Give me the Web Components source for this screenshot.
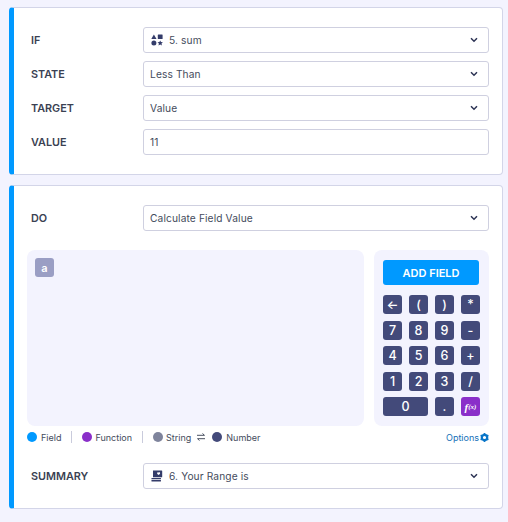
<!DOCTYPE html>
<html>
<head>
<meta charset="utf-8">
<title>Condition</title>
<style>
  html, body { margin: 0; height: 100%; overflow: hidden; }
  body {
    background: #f3f3fe;
    padding: 7px 5px 0 9px;
    box-sizing: border-box;
    font-family: "Inter", "Liberation Sans", sans-serif;
    color: #343c4e;
  }
  cond-card + cond-card { margin-top: 10px; }
</style>
</head>
<body>

<cond-card>
  <field-row label="IF"><field-box arrow>
    <svg slot="icon" width="12" height="12" viewBox="0 0 12 12" fill="#343c6a"><path d="M2.900.4 5.500 5H.3z"/><rect x="6.800" y=".4" width="4.800" height="4.600" rx=".5"/><circle cx="2.900" cy="9" r="2.500"/><path d="m9.200 6.400.8 1.700 1.900.2-1.400 1.300.4 1.900-1.700-1-1.700 1 .4-1.900-1.400-1.300 1.900-.2z"/></svg>
    5. sum</field-box></field-row>
  <field-row label="STATE"><field-box arrow>Less Than</field-box></field-row>
  <field-row label="TARGET"><field-box arrow>Value</field-box></field-row>
  <field-row label="VALUE"><field-box>11</field-box></field-row>
</cond-card>

<cond-card>
  <field-row label="DO"><field-box arrow>Calculate Field Value</field-box></field-row>
  <calc-panel></calc-panel>
  <calc-legend></calc-legend>
  <field-row label="SUMMARY"><field-box arrow>
    <svg slot="icon" width="12" height="12" viewBox="0 0 12 12" fill="#343c6a"><path d="M2 .5h8.600a.6.6 0 0 1 .6.6v5.600a.6.6 0 0 1-.6.6H2z"/><path d="M7.600 2.700c.4-.6 1.600-.4 1.500.5 0 .6-.8 1.200-1.500 1.700-.7-.5-1.500-1.100-1.500-1.700 0-.9 1.100-1.100 1.500-.5z" fill="#fff"/><rect x=".4" y="8.100" width="9.600" height="1.200" rx=".3"/><rect x=".4" y="10.100" width="9.600" height="1.300" rx=".3"/></svg>
    6. Your Range is</field-box></field-row>
</cond-card>

<script>
class CondCard extends HTMLElement {
    constructor() {
        super();
        this.attachShadow({ mode: 'open' });
        this.shadowRoot.innerHTML = `
            <style>
                :host {
                    display: flex;
                    flex-direction: column;
                    box-sizing: border-box;
                    width: 494px;
                    padding: 19px 13px 19px 13px;
                    background: #fff;
                    border: 1px solid #d3d5e8;
                    border-left: 5px solid #0099ff;
                    border-radius: 4px;
                }
                .stack { display: flex; flex-direction: column; gap: 8px; }
            </style>
            <div class="stack"><slot></slot></div>
        `;
    }
}

class FieldRow extends HTMLElement {
    constructor() {
        super();
        this.attachShadow({ mode: 'open' });
        this.shadowRoot.innerHTML = `
            <style>
                :host { display: flex; align-items: center; padding-left: 4px; }
                .label {
                    width: 112px;
                    flex: none;
                    font-size: 10.8px;
                    font-weight: 600;
                    color: #3a4152;
                }
                .control { flex: 1; min-width: 0; }
            </style>
            <div class="label"></div>
            <div class="control"><slot></slot></div>
        `;
        this.shadowRoot.querySelector('.label').textContent = this.getAttribute('label');
    }
}

class FieldBox extends HTMLElement {
    connectedCallback() {
        if (this.shadowRoot) return;
        this.attachShadow({ mode: 'open' });
        const arrow = this.hasAttribute('arrow')
            ? `<svg class="chev" width="8" height="6" viewBox="0 0 8 6"><path d="M1 1.300 4 4.300 7 1.300" fill="none" stroke="#2c3354" stroke-width="1.500"/></svg>`
            : '';
        this.shadowRoot.innerHTML = `
            <style>
                :host {
                    display: flex;
                    align-items: center;
                    box-sizing: border-box;
                    height: 26px;
                    padding: 0 10.5px 0 6px;
                    background: #fff;
                    border: 1px solid #cfd0e0;
                    border-radius: 3px;
                    font-size: 10.2px;
                    letter-spacing: .12px;
                    color: #444b5c;
                }
                ::slotted(svg) { flex: none; margin: 0 6px 0 1px; }
                .text { flex: 1; white-space: nowrap; }
                .chev { flex: none; }
            </style>
            <slot name="icon"></slot>
            <span class="text"><slot></slot></span>
            ${arrow}
        `;
    }
}

class CalcPanel extends HTMLElement {
    constructor() {
        super();
        this.attachShadow({ mode: 'open' });
        const keys = ['←', '(', ')', '*', '7', '8', '9', '-', '4', '5', '6', '+', '1', '2', '3', '/'];
        const buttons = keys.map(k => `<button>${k}</button>`).join('');
        this.shadowRoot.innerHTML = `
            <style>
                :host {
                    display: grid;
                    grid-template-columns: 337px 115px;
                    gap: 10px;
                    height: 176px;
                    margin-top: 11px;
                }
                .area {
                    background: #f3f3fe;
                    border-radius: 8px;
                    padding: 8px;
                }
                .token {
                    display: flex;
                    align-items: center;
                    justify-content: center;
                    width: 19px;
                    height: 19px;
                    border-radius: 3px;
                    background: #9a9ec4;
                    color: #fff;
                    font-size: 11px;
                    font-weight: 600;
                }
                .pad {
                    background: #f3f3fe;
                    border-radius: 8px;
                    padding: 10px 10px 10px 9px;
                }
                .add {
                    display: flex;
                    align-items: center;
                    justify-content: center;
                    height: 25px;
                    margin-bottom: 10px;
                    border-radius: 3px;
                    background: #0099ff;
                    color: #fff;
                    font-size: 11px;
                    font-weight: 600;
                }
                .keys {
                    display: grid;
                    grid-template-columns: repeat(4, 19px);
                    grid-auto-rows: 19px;
                    column-gap: 7px;
                    row-gap: 6.5px;
                }
                button {
                    display: flex;
                    align-items: center;
                    justify-content: center;
                    padding: 0;
                    border: 0;
                    border-radius: 3px;
                    background: #434a7a;
                    color: #fff;
                    font: 500 12.5px "Inter", "Liberation Sans", sans-serif;
                }
                .wide { grid-column: span 2; }
                .fx {
                    background: #8a2fc9;
                    font: italic 600 11px "Liberation Serif", serif;
                }
                .fx small { font-size: 7px; }
            </style>
            <div class="area"><div class="token">a</div></div>
            <div class="pad">
                <div class="add">ADD FIELD</div>
                <div class="keys">
                    ${buttons}
                    <button class="wide">0</button>
                    <button>.</button>
                    <button class="fx">f<small>(x)</small></button>
                </div>
            </div>
        `;
    }
}

class CalcLegend extends HTMLElement {
    constructor() {
        super();
        this.attachShadow({ mode: 'open' });
        this.shadowRoot.innerHTML = `
            <style>
                :host {
                    display: flex;
                    align-items: center;
                    height: 22px;
                    margin: -8px 0 7px;
                    font-size: 9px;
                    color: #444b5c;
                }
                .item { display: flex; align-items: center; gap: 4px; white-space: nowrap; }
                .item.tight { gap: 3px; }
                i { display: block; width: 10px; height: 10px; border-radius: 50%; }
                .sep { width: 1px; height: 12px; background: #c9cbdc; margin: 0 10px; }
                .swap { margin: 0 7px 0 6px; flex: none; }
                .options {
                    margin-left: auto;
                    display: flex;
                    align-items: center;
                    gap: 1px;
                    color: #1470b8;
                }
            </style>
            <div class="item"><i style="background:#0099ff"></i>Field</div>
            <div class="sep"></div>
            <div class="item tight"><i style="background:#8a2fc9"></i>Function</div>
            <div class="sep"></div>
            <div class="item tight"><i style="background:#7f849c"></i>String</div>
            <svg class="swap" width="8" height="8" viewBox="0 0 8 8" fill="none" stroke="#343c4e" stroke-width=".9"><path d="M0 2.300h7.400M5.500.5l2 1.800M8 5.700H.6M2.500 7.500l-2-1.800"/></svg>
            <div class="item"><i style="background:#434a7a"></i>Number</div>
            <div class="options">Options
                <svg width="9" height="9" viewBox="0 0 9 9"><circle cx="4.500" cy="4.500" r="2.700" fill="none" stroke="#0b76c8" stroke-width="2.200"/><path d="M4.500 0v9M.6 2.250l7.800 4.500M.6 6.750l7.800-4.500" stroke="#0b76c8" stroke-width="1.700" stroke-dasharray="1.500 6 1.500"/></svg>
            </div>
        `;
    }
}

customElements.define('cond-card', CondCard);
customElements.define('field-row', FieldRow);
customElements.define('field-box', FieldBox);
customElements.define('calc-panel', CalcPanel);
customElements.define('calc-legend', CalcLegend);
</script>
</body>
</html>
